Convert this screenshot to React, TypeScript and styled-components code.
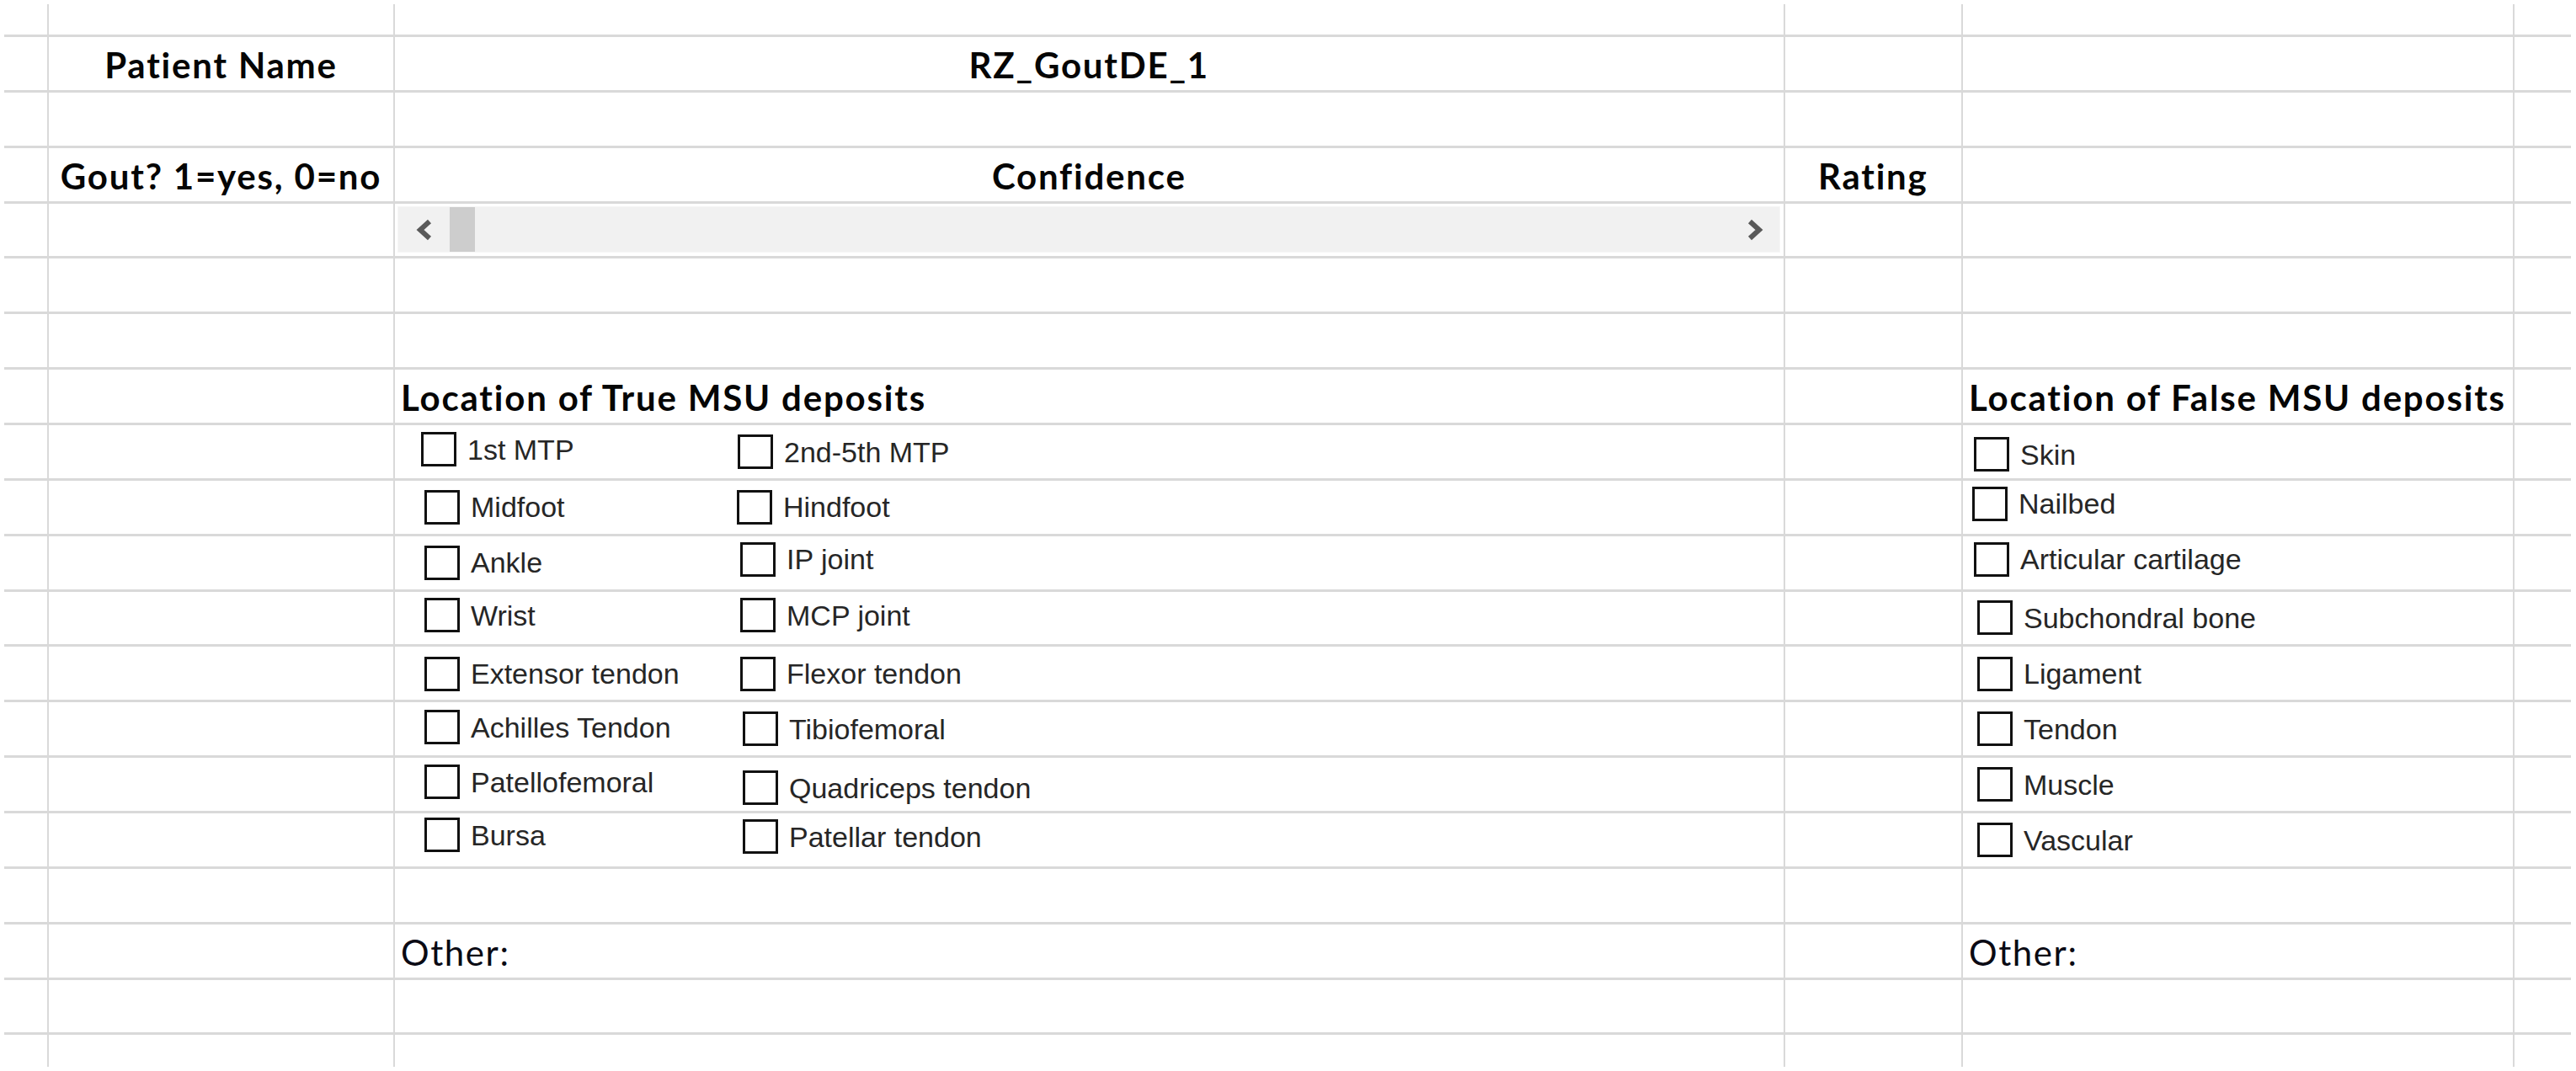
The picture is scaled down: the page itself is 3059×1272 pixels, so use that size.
import React from "react";
import styled, { createGlobalStyle } from "styled-components";

const GlobalStyle = createGlobalStyle`
  html, body { margin: 0; padding: 0; background: #ffffff; }
  body { width: 3059px; height: 1272px; overflow: hidden; }
`;

const Sheet = styled.div`
  margin: 5px 0 0 5px;
  width: 3048px;
  display: grid;
  grid-template-columns: 51px 409px 1648.5px 209.5px 653px 67px;
  grid-template-rows: 36px repeat(18, 62.86px) 37.5px;
  column-gap: 2px;
  row-gap: 3px;
  background: #d9d9d9;
`;

const Cell = styled.div<{ $align?: "left" | "center"; $valign?: "top" | "bottom" }>`
  background: #ffffff;
  display: flex;
  align-items: ${(p) => (p.$valign === "top" ? "flex-start" : "flex-end")};
  justify-content: ${(p) => (p.$align === "center" ? "center" : "flex-start")};
  min-width: 0;
`;

const HeadText = styled.span`
  font-family: Lato, "Liberation Sans", sans-serif;
  font-weight: 700;
  font-size: 42px;
  letter-spacing: 1.8px;
  line-height: 1;
  color: #050505;
  padding-bottom: 9px;
  white-space: nowrap;
`;

const SectionTitle = styled(HeadText)`
  padding-left: 7px;
`;

const OtherText = styled.span`
  font-family: Lato, "Liberation Sans", sans-serif;
  font-weight: 400;
  font-size: 42px;
  letter-spacing: 1.6px;
  line-height: 1;
  color: #0a0a14;
  padding-left: 7px;
  padding-bottom: 9px;
  white-space: nowrap;
`;

const ScrollBar = styled.div`
  flex: 1;
  align-self: stretch;
  margin: 3.5px 3.5px 4.5px 3px;
  background: #f1f1f1;
  border: 1px solid #f6f6f6;
  display: flex;
  align-items: stretch;
`;

const ArrowBtn = styled.div<{ $w: number }>`
  width: ${(p) => p.$w}px;
  flex: none;
  display: flex;
  align-items: center;
  justify-content: center;
`;

const Thumb = styled.div`
  width: 30px;
  flex: none;
  background: #cdcdcd;
`;

const Track = styled.div`
  flex: 1;
`;

const CheckPair = styled.div`
  flex: 1;
  align-self: stretch;
  display: grid;
  grid-template-columns: 400px 1fr;
  align-items: start;
`;

const CheckItem = styled.div<{ $x: number; $y: number }>`
  display: flex;
  align-items: center;
  gap: 13px;
  margin-left: ${(p) => p.$x}px;
  margin-top: ${(p) => p.$y}px;
`;

const Box = styled.span`
  width: 42px;
  height: 41px;
  box-sizing: border-box;
  border: 3px solid #111111;
  background: #ffffff;
  flex: none;
`;

const Label = styled.span`
  font-family: "Liberation Sans", Arial, sans-serif;
  font-size: 34px;
  line-height: 1;
  color: #262626;
  white-space: nowrap;
`;

type Item = { label: string; x: number; y: number };

const trueRows: [Item, Item][] = [
  [{ label: "1st MTP", x: 31, y: 8 }, { label: "2nd-5th MTP", x: 7, y: 11 }],
  [{ label: "Midfoot", x: 35, y: 11 }, { label: "Hindfoot", x: 6, y: 11 }],
  [{ label: "Ankle", x: 35, y: 11 }, { label: "IP joint", x: 10, y: 7 }],
  [{ label: "Wrist", x: 35, y: 7.5 }, { label: "MCP joint", x: 10, y: 7.5 }],
  [{ label: "Extensor tendon", x: 35, y: 11.5 }, { label: "Flexor tendon", x: 10, y: 11.5 }],
  [{ label: "Achilles Tendon", x: 35, y: 9 }, { label: "Tibiofemoral", x: 13, y: 11 }],
  [{ label: "Patellofemoral", x: 35, y: 8 }, { label: "Quadriceps tendon", x: 13, y: 15 }],
  [{ label: "Bursa", x: 35, y: 5 }, { label: "Patellar tendon", x: 13, y: 7 }],
];

const falseRows: Item[] = [
  { label: "Skin", x: 13, y: 14 },
  { label: "Nailbed", x: 11, y: 7 },
  { label: "Articular cartilage", x: 13, y: 7 },
  { label: "Subchondral bone", x: 17, y: 10.5 },
  { label: "Ligament", x: 17, y: 11.5 },
  { label: "Tendon", x: 17, y: 11 },
  { label: "Muscle", x: 17, y: 11 },
  { label: "Vascular", x: 17, y: 11 },
];

const Chevron: React.FC<{ dir: "left" | "right" }> = ({ dir }) => (
  <svg width="22" height="26" viewBox="0 0 22 26">
    <polyline
      points={dir === "left" ? "17,3 6,13 17,23" : "5,3 16,13 5,23"}
      fill="none"
      stroke="#595959"
      strokeWidth="6"
      strokeLinejoin="miter"
    />
  </svg>
);

const Check: React.FC<{ item: Item }> = ({ item }) => (
  <CheckItem $x={item.x} $y={item.y}>
    <Box />
    <Label>{item.label}</Label>
  </CheckItem>
);

const ROWS = 20;
const COLS = 6;

function cellContent(r: number, c: number): { node?: React.ReactNode; align?: "left" | "center"; valign?: "top" | "bottom" } {
  if (r === 2) {
    if (c === 1) return { node: <HeadText>Patient Name</HeadText>, align: "center" };
    if (c === 2) return { node: <HeadText>RZ_GoutDE_1</HeadText>, align: "center" };
  }
  if (r === 4) {
    if (c === 1) return { node: <HeadText>Gout? 1=yes, 0=no</HeadText>, align: "center" };
    if (c === 2) return { node: <HeadText>Confidence</HeadText>, align: "center" };
    if (c === 3) return { node: <HeadText>Rating</HeadText>, align: "center" };
  }
  if (r === 5 && c === 2) {
    return {
      node: (
        <ScrollBar>
          <ArrowBtn $w={61}>
            <Chevron dir="left" />
          </ArrowBtn>
          <Thumb />
          <Track />
          <ArrowBtn $w={59}>
            <Chevron dir="right" />
          </ArrowBtn>
        </ScrollBar>
      ),
    };
  }
  if (r === 8) {
    if (c === 2) return { node: <SectionTitle>Location of True MSU deposits</SectionTitle> };
    if (c === 4) return { node: <SectionTitle>Location of False MSU deposits</SectionTitle> };
  }
  if (r >= 9 && r <= 16) {
    const i = r - 9;
    if (c === 2)
      return {
        node: (
          <CheckPair>
            <Check item={trueRows[i][0]} />
            <Check item={trueRows[i][1]} />
          </CheckPair>
        ),
        valign: "top",
      };
    if (c === 4) return { node: <Check item={falseRows[i]} />, valign: "top" };
  }
  if (r === 18 && (c === 2 || c === 4)) return { node: <OtherText>Other:</OtherText> };
  return {};
}

export default function App() {
  const cells: React.ReactNode[] = [];
  for (let r = 1; r <= ROWS; r++) {
    for (let c = 0; c < COLS; c++) {
      const { node, align, valign } = cellContent(r, c);
      cells.push(
        <Cell key={`${r}-${c}`} $align={align} $valign={valign}>
          {node}
        </Cell>
      );
    }
  }
  return (
    <>
      <GlobalStyle />
      <Sheet>{cells}</Sheet>
    </>
  );
}
